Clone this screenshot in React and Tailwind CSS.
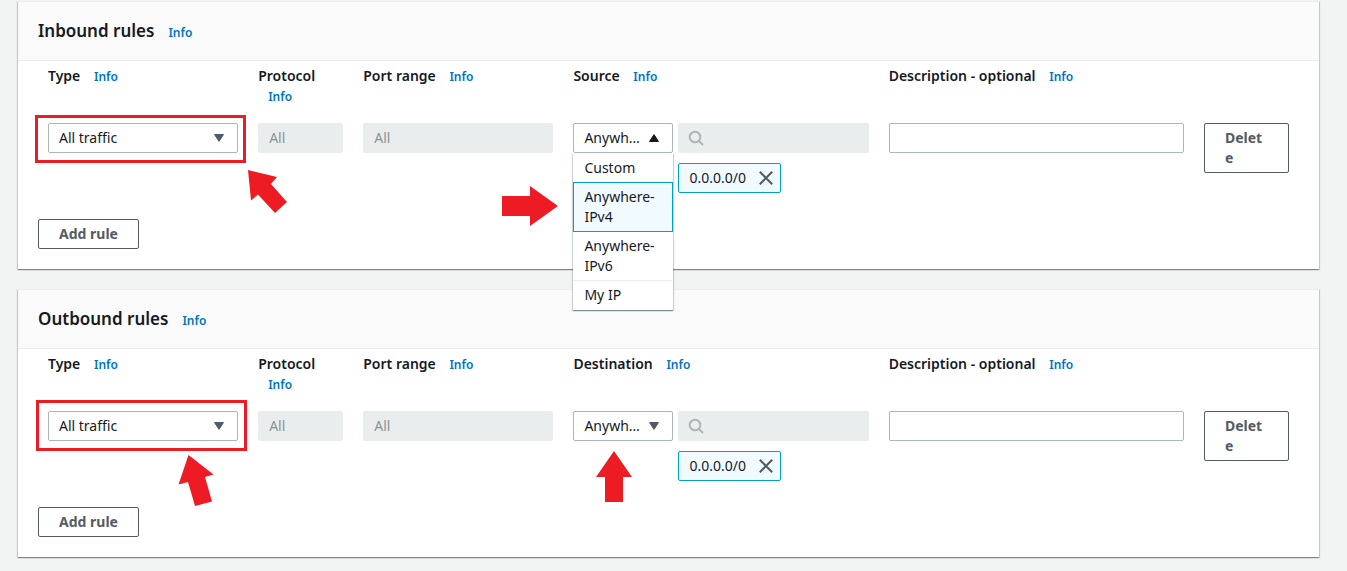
import React from "react";

const CARD_SHADOW =
  "shadow-[0_1px_1px_0_rgba(0,28,36,0.3),1px_1px_1px_0_rgba(0,28,36,0.15),-1px_1px_1px_0_rgba(0,28,36,0.15)]";

function Info() {
  return (
    <a href="#info" className="ml-[10px] inline-block text-[12px] leading-5 font-semibold text-[#0073bb]">
      Info
    </a>
  );
}

function Label({ htmlFor, span, children }) {
  return (
    <div className={`${span} font-semibold`}>
      <label htmlFor={htmlFor}>{children}</label> <Info />
    </div>
  );
}

function Triangle({ up }) {
  return (
    <svg
      viewBox="0 0 10 8"
      className={`pointer-events-none absolute top-[11px] right-[14px] h-2 w-[10px] ${up ? "text-[#16191f]" : "text-[#545b64]"}`}
      aria-hidden="true"
    >
      <path
        d={up ? "M5 0.6 L9.5 7.5 H0.5 Z" : "M0.5 0.5 H9.5 L5 7.4 Z"}
        fill="currentColor"
        stroke="currentColor"
        strokeWidth="1"
        strokeLinejoin="round"
      />
    </svg>
  );
}

function Select({ id, value, options, up }) {
  return (
    <>
      <select
        id={id}
        defaultValue={value}
        className="block h-[30px] w-full appearance-none overflow-hidden rounded-[2px] border border-[#aab7b8] bg-white pr-[30px] pl-[10px] text-ellipsis whitespace-nowrap"
      >
        {options.map((o) => (
          <option key={o}>{o}</option>
        ))}
      </select>
      <Triangle up={up} />
    </>
  );
}

const sources = ["Custom", "Anywhere-IPv4", "Anywhere-IPv6", "My IP"];

function SourceMenu() {
  return (
    <ul
      role="listbox"
      aria-label="Source options"
      className={`absolute top-[30px] left-0 z-10 w-full bg-white ${CARD_SHADOW}`}
    >
      {sources.map((s, i) => (
        <li
          key={s}
          role="option"
          aria-selected={i === 1}
          className={
            i === 1
              ? "relative z-10 -mt-px border border-[#00a1c9] bg-[#f1faff] px-[10px] py-1"
              : i === 0
                ? "border border-transparent px-[10px] py-1"
                : "-mt-px border border-transparent border-t-[#eaeded] px-[10px] py-1"
          }
        >
          {s}
        </li>
      ))}
    </ul>
  );
}

function Arrow({ className, viewBox, points }) {
  return (
    <svg className={`pointer-events-none absolute z-20 ${className}`} viewBox={viewBox} aria-hidden="true">
      <polygon points={points} fill="#ed1c24" />
    </svg>
  );
}

function RulesCard({ id, title, target, open, typeMarks, targetMarks }) {
  const disabled = "block h-[30px] w-full rounded-[2px] bg-[#eaeded] px-[11px] pb-[2px] text-[#879596]";
  return (
    <section className={`border-t border-[#eaeded] bg-white ${CARD_SHADOW}`}>
      <header className="flex items-center border-b border-[#eaeded] bg-[#fafafa] px-5 py-[17px]">
        <h2 className="text-[17px] leading-6 font-semibold">{title}</h2>
        <div className="ml-1 flex pt-1">
          <Info />
        </div>
      </header>
      <div className="px-5 pt-[5px] pb-5">
        <div className="grid grid-cols-12 gap-x-5 gap-y-4 px-[10px]">
          <Label htmlFor={`${id}-type`} span="col-span-2">Type</Label>
          <Label htmlFor={`${id}-protocol`} span="col-span-1">Protocol</Label>
          <Label htmlFor={`${id}-port`} span="col-span-2">Port range</Label>
          <Label htmlFor={`${id}-target`} span="col-span-3">{target}</Label>
          <Label htmlFor={`${id}-description`} span="col-span-3">Description - optional</Label>
          <div />

          <div className="col-span-2">
            <div className="relative">
              <Select id={`${id}-type`} value="All traffic" options={["All traffic", "Custom TCP", "Custom UDP"]} />
              {typeMarks}
            </div>
          </div>
          <div>
            <input id={`${id}-protocol`} disabled defaultValue="All" className={disabled} />
          </div>
          <div className="col-span-2">
            <input id={`${id}-port`} disabled defaultValue="All" className={disabled} />
          </div>
          <div className="col-span-3 flex gap-[5px]">
            <div className="relative w-[100px] shrink-0">
              <Select id={`${id}-target`} value="Anywhere-IPv4" options={sources} up={open} />
              {open && <SourceMenu />}
              {targetMarks}
            </div>
            <div className="min-w-0 flex-1">
              <div className="relative">
                <input type="search" disabled aria-label={`${target} search`} className={disabled} />
                <svg
                  viewBox="0 0 16 16"
                  className="pointer-events-none absolute top-[7px] left-[10px] size-4 text-[#aab7b8]"
                  fill="none"
                  stroke="currentColor"
                  strokeWidth="2"
                  aria-hidden="true"
                >
                  <circle cx="7" cy="7" r="5.3" />
                  <path d="M10.8 10.8 L15 15" />
                </svg>
              </div>
              <div className="mt-[10px] flex h-[30px] w-fit items-center gap-3 rounded-[2px] border border-[#00a1c9] bg-[#f1faff] pr-[6px] pl-[10px]">
                <span>0.0.0.0/0</span>
                <button type="button" aria-label="Remove 0.0.0.0/0" className="text-[#545b64]">
                  <svg viewBox="0 0 16 16" className="size-4" stroke="currentColor" strokeWidth="2" aria-hidden="true">
                    <path d="M1.8 1.8 L14.2 14.2 M14.2 1.8 L1.8 14.2" />
                  </svg>
                </button>
              </div>
            </div>
          </div>
          <div className="col-span-3">
            <input
              id={`${id}-description`}
              type="text"
              className="block h-[30px] w-full rounded-[2px] border border-[#aab7b8] bg-white px-[10px]"
            />
          </div>
          <div>
            <button
              type="button"
              className="w-full rounded-[2px] border border-[#545b64] px-5 py-1 text-left font-bold break-all text-[#545b64]"
            >
              Delete
            </button>
          </div>
        </div>
        <button
          type="button"
          className="mt-[26px] block h-[30px] rounded-[2px] border border-[#545b64] px-5 font-bold text-[#545b64]"
        >
          Add rule
        </button>
      </div>
    </section>
  );
}

export default function App() {
  return (
    <main className="flex min-h-screen flex-col gap-5 bg-[#f2f3f3] pt-px pr-7 pb-[14px] pl-[18px] font-['Noto_Sans',sans-serif] text-[14px] leading-5 text-[#16191f]">
      <RulesCard
        id="inbound"
        title="Inbound rules"
        target="Source"
        open
        typeMarks={
          <>
            <div className="pointer-events-none absolute -top-2 -right-2 -bottom-[10px] -left-[13px] border-3 border-[#ed1c24]" />
            <Arrow
              className="top-[47px] left-[200px] h-11 w-10"
              viewBox="0 0 40 44"
              points="0,0 29,7 23,14 39,32 27,43 10,24.5 3,30.5"
            />
          </>
        }
        targetMarks={
          <Arrow
            className="top-[63px] -left-[71px] h-10 w-14"
            viewBox="0 0 56 40"
            points="0,10 28,10 28,0 56,20 28,40 28,30 0,30"
          />
        }
      />
      <RulesCard
        id="outbound"
        title="Outbound rules"
        target="Destination"
        typeMarks={
          <>
            <div className="pointer-events-none absolute -top-[11px] -right-[9px] -bottom-[10px] -left-3 border-3 border-[#ed1c24]" />
            <Arrow
              className="top-11 left-[130px] h-[52px] w-9"
              viewBox="0 0 36 52"
              points="10.5,0 35.5,19.5 27,22 34,46.5 17,51 10,27 0.5,29.5"
            />
          </>
        }
        targetMarks={
          <Arrow
            className="top-10 left-[23px] h-[51px] w-9"
            viewBox="0 0 36 51"
            points="18,0 36,26 27,26 27,51 9,51 9,26 0,26"
          />
        }
      />
    </main>
  );
}
